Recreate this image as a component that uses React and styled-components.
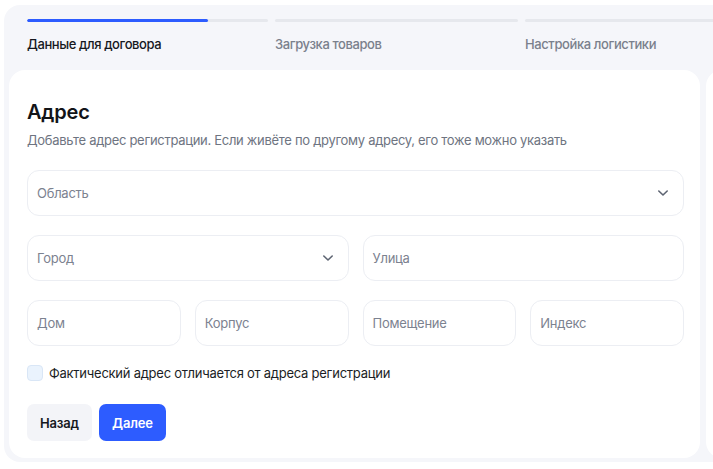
import React from "react";
import styled, { createGlobalStyle } from "styled-components";

/* --- Global --- */
const GlobalStyle = createGlobalStyle`
  html, body {
    margin: 0;
    padding: 0;
    background: #ffffff;
    overflow: hidden;
  }
  body {
    font-family: Inter, "Noto Sans", "DejaVu Sans", sans-serif;
    color: #15181e;
    letter-spacing: -0.25px;
  }
  * {
    box-sizing: border-box;
  }
`;

/* --- Styles --- */
const Shell = styled.div`
  margin: 5px 0 0 4px;
  width: 740px;
  height: 457px;
  padding: 14px 0 4px 5px;
  background: #f5f6fa;
  border-radius: 16px 0 0 16px;
  display: flex;
  flex-direction: column;
`;

const Stepper = styled.div`
  display: grid;
  grid-template-columns: 241px 243px 243px;
  column-gap: 7px;
  margin-left: 18px;
`;

const Step = styled.div`
  display: flex;
  flex-direction: column;
  gap: 14px;
`;

const Track = styled.div`
  height: 3px;
  border-radius: 2px;
  background: #e6e8ed;
  overflow: hidden;
`;

const Fill = styled.div`
  height: 100%;
  background: #2d5cff;
  border-radius: 2px;
`;

const StepLabel = styled.span`
  font-size: 13px;
  line-height: 16px;
  font-weight: 500;
  letter-spacing: -0.4px;
  color: ${p => (p.$active ? "#15181e" : "#7a808c")};
`;

const Cards = styled.div`
  display: flex;
  gap: 6px;
  margin-top: 18px;
  flex: 1;
`;

const Card = styled.section`
  flex: 0 0 ${p => p.$width}px;
  background: #ffffff;
  border-radius: 16px;
  padding: 28px 16px 0 18px;
`;

const Title = styled.h2`
  margin: 0;
  font-size: 20px;
  line-height: 28px;
  font-weight: 600;
  letter-spacing: -0.2px;
  color: #121418;
`;

const Subtitle = styled.p`
  margin: 5px 0 0;
  font-size: 13px;
  line-height: 18px;
  letter-spacing: -0.3px;
  color: #6e7481;
`;

const Fields = styled.div`
  display: grid;
  grid-template-columns: repeat(4, 1fr);
  column-gap: 14px;
  row-gap: 19px;
  margin-top: 21px;
`;

const Field = styled.div`
  grid-column: span ${p => p.$span || 1};
  height: 46px;
  display: flex;
  align-items: center;
  justify-content: space-between;
  padding: 0 14px 0 9px;
  border: 1px solid #eceef3;
  border-radius: 12px;
  background: #ffffff;
  font-size: 13px;
  color: #7c8290;
`;

const Chevron = () => (
  <svg width="12" height="8" viewBox="0 0 12 8" fill="none">
    <path
      d="M1.8 2l4.2 4 4.2-4"
      stroke="#5d6472"
      strokeWidth="1.6"
      strokeLinecap="round"
      strokeLinejoin="round"
    />
  </svg>
);

const CheckRow = styled.label`
  display: flex;
  align-items: center;
  gap: 6px;
  margin-top: 19px;
  font-size: 13px;
  color: #1b1e25;
`;

const CheckBox = styled.span`
  width: 16px;
  height: 16px;
  border-radius: 4px;
  background: #eaf3fd;
  border: 1px solid #d9e6f6;
`;

const Actions = styled.div`
  display: flex;
  gap: 7px;
  margin-top: 23px;
`;

const Button = styled.button`
  height: 37px;
  min-width: 65px;
  padding: 0 13px;
  border: none;
  border-radius: 7px;
  font-family: inherit;
  font-size: 13px;
  font-weight: 600;
  letter-spacing: -0.2px;
  cursor: pointer;
  background: ${p => (p.$primary ? "#2d5cff" : "#f3f4f8")};
  color: ${p => (p.$primary ? "#ffffff" : "#16191f")};
`;

/* --- Data --- */
const steps = [
  { name: "Данные для договора", progress: 0.75 },
  { name: "Загрузка товаров", progress: 0 },
  { name: "Настройка логистики", progress: 0 }
];

const fields = [
  { label: "Область", span: 4, select: true },
  { label: "Город", span: 2, select: true },
  { label: "Улица", span: 2 },
  { label: "Дом" },
  { label: "Корпус" },
  { label: "Помещение" },
  { label: "Индекс" }
];

/* --- Component --- */
export default function App() {
  return (
    <>
      <GlobalStyle />
      <Shell>
        <Stepper>
          {steps.map((step, i) => (
            <Step key={step.name}>
              <Track>
                <Fill style={{ width: `${step.progress * 100}%` }} />
              </Track>
              <StepLabel $active={i === 0}>{step.name}</StepLabel>
            </Step>
          ))}
        </Stepper>

        <Cards>
          <Card $width={691}>
            <Title>Адрес</Title>
            <Subtitle>
              Добавьте адрес регистрации. Если живёте по другому адресу, его
              тоже можно указать
            </Subtitle>

            <Fields>
              {fields.map(f => (
                <Field key={f.label} $span={f.span}>
                  <span>{f.label}</span>
                  {f.select && <Chevron />}
                </Field>
              ))}
            </Fields>

            <CheckRow>
              <CheckBox />
              Фактический адрес отличается от адреса регистрации
            </CheckRow>

            <Actions>
              <Button>Назад</Button>
              <Button $primary>Далее</Button>
            </Actions>
          </Card>
          <Card $width={300} />
        </Cards>
      </Shell>
    </>
  );
}
